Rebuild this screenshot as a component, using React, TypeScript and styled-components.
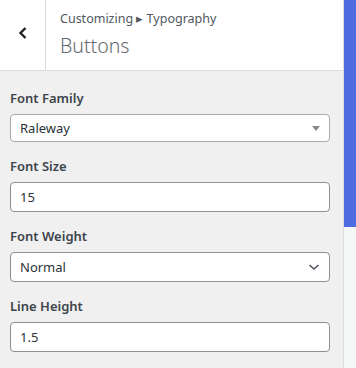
import styled, { createGlobalStyle } from "styled-components";

const GlobalStyle = createGlobalStyle`
  html, body {
    margin: 0;
    padding: 0;
    background: #f6f7f7;
    font-family: "Noto Sans", "Open Sans", sans-serif;
  }
  * {
    box-sizing: border-box;
  }
`;

const Screen = styled.div`
  display: flex;
  width: 356px;
  height: 368px;
  overflow: hidden;
`;

const Panel = styled.div`
  width: 344px;
  flex-shrink: 0;
  background: #f0f0f1;
  border-right: 1px solid #dcdcde;
  display: flex;
  flex-direction: column;
`;

const Preview = styled.div`
  flex: 1;
  display: flex;
  flex-direction: column;
  background: #f6f7f7;
`;

const PreviewBar = styled.div`
  height: 227px;
  background: #4e6be0;
`;

const Header = styled.div`
  display: flex;
  height: 71px;
  background: #fff;
  border-bottom: 1px solid #dcdcde;
`;

const BackButton = styled.button`
  width: 46px;
  flex-shrink: 0;
  border: none;
  border-right: 1px solid #dcdcde;
  background: #fff;
  display: flex;
  align-items: center;
  justify-content: center;
  padding: 0 0 4px 0;
  cursor: pointer;
`;

const TitleBlock = styled.div`
  display: flex;
  flex-direction: column;
  padding: 9px 0 0 14px;
`;

const Crumbs = styled.span`
  font-size: 12.5px;
  line-height: 20px;
  color: #50575e;
`;

const Title = styled.h3`
  margin: 4px 0 0;
  font-size: 19.5px;
  line-height: 26px;
  font-weight: 300;
  color: #646970;
`;

const Body = styled.div`
  display: flex;
  flex-direction: column;
  gap: 14px;
  padding: 17px 13px 0 10px;
`;

const Field = styled.div`
  display: flex;
  flex-direction: column;
  gap: 6px;
`;

const Label = styled.label`
  font-size: 13px;
  line-height: 20px;
  font-weight: 600;
  color: #3c434a;
`;

const Box = styled.div<{ $h: number; $soft?: boolean }>`
  height: ${(p) => p.$h}px;
  background: #fff;
  border: 1px solid ${(p) => (p.$soft ? "#aaa" : "#8c8f94")};
  border-radius: 4px;
  display: flex;
  align-items: center;
  padding: 0 9px;
  font-size: 13px;
  color: #2c3338;
`;

const Caret = styled.span`
  margin-left: auto;
  width: 0;
  height: 0;
  border-left: 4px solid transparent;
  border-right: 4px solid transparent;
  border-top: 5px solid #888;
`;

const Chevron = () => (
  <svg width="12" height="12" viewBox="0 0 12 12" style={{ marginLeft: "auto" }}>
    <polyline points="1.5,4 6,8 10.5,4" fill="none" stroke="#50575e" strokeWidth="1.6" />
  </svg>
);

const App = () => {
  return (
    <Screen>
      <GlobalStyle />
      <Panel>
        <Header>
          <BackButton>
            <svg width="12" height="14" viewBox="0 0 12 14">
              <polyline points="8.5,2 3.5,7 8.5,12" fill="none" stroke="#1d2327" strokeWidth="2.4" />
            </svg>
          </BackButton>
          <TitleBlock>
            <Crumbs>Customizing ▸ Typography</Crumbs>
            <Title>Buttons</Title>
          </TitleBlock>
        </Header>
        <Body>
          <Field>
            <Label>Font Family</Label>
            <Box $h={28} $soft>
              Raleway
              <Caret />
            </Box>
          </Field>
          <Field>
            <Label>Font Size</Label>
            <Box $h={30}>15</Box>
          </Field>
          <Field>
            <Label>Font Weight</Label>
            <Box $h={30}>
              Normal
              <Chevron />
            </Box>
          </Field>
          <Field>
            <Label>Line Height</Label>
            <Box $h={30}>1.5</Box>
          </Field>
        </Body>
      </Panel>
      <Preview>
        <PreviewBar />
      </Preview>
    </Screen>
  );
};

export default App;
